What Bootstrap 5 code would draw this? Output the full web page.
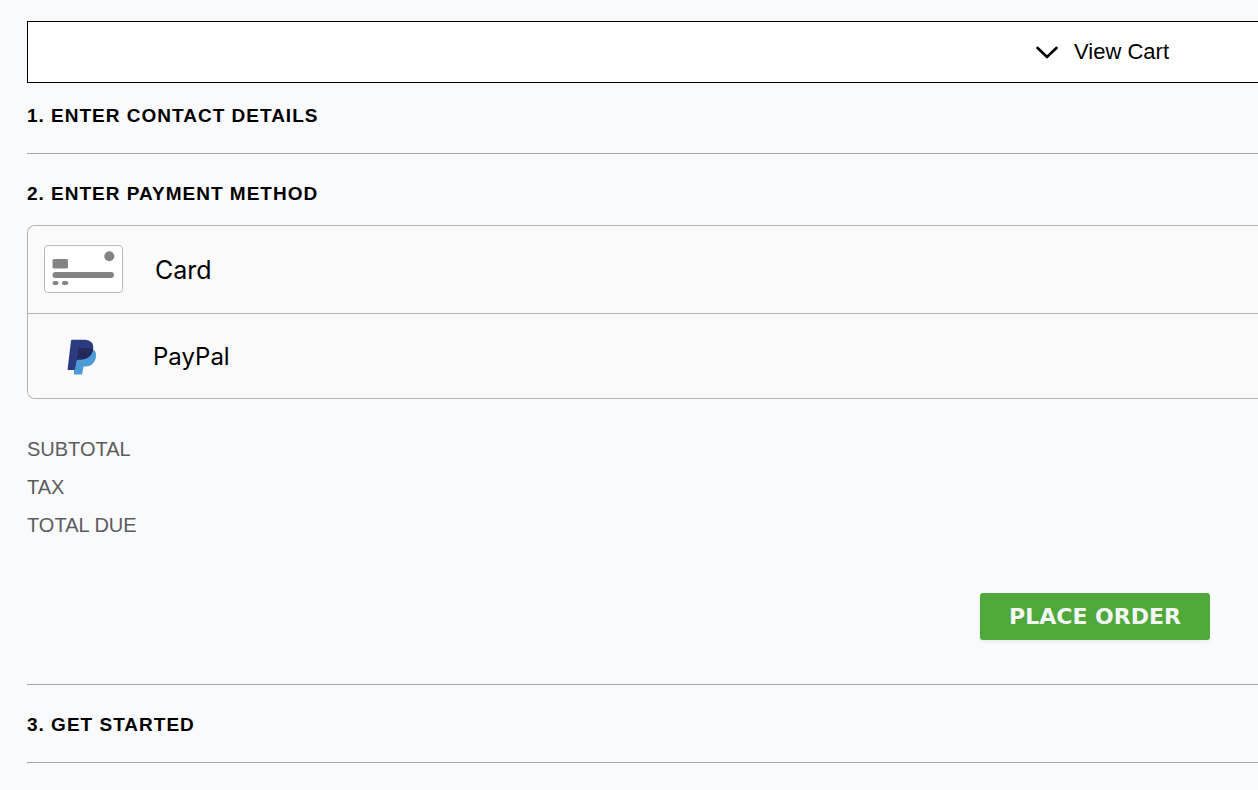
<!DOCTYPE html>
<html lang="en">
<head>
<meta charset="utf-8">
<meta name="viewport" content="width=device-width, initial-scale=1">
<title>Checkout</title>
<link href="https://cdn.jsdelivr.net/npm/bootstrap@5.3.0/dist/css/bootstrap.min.css" rel="stylesheet">
<style>
  body { background: #f9fafc; color: #000; font-family: "Liberation Sans", Arial, sans-serif; }
  .checkout { padding: 21px 0 24px 27px; }
  .cart-toggle { height: 62px; padding-right: 89px; gap: 16px; background: #fff; border: 1px solid #000; border-right: 0; font-size: 22px; line-height: 24px; color: #000; }
  .step { padding: 28px 0 25px; border-bottom: 1px solid #a6a7a9; }
  .step-first { padding-top: 21px; }
  .step-order { padding-bottom: 44px; }
  .step-title { font-size: 19px; line-height: 24px; font-weight: 700; letter-spacing: 1px; margin: 0; }
  .methods { margin-top: 19px; border: 1px solid #b3b3b3; border-right: 0; border-radius: 8px 0 0 8px; overflow: hidden; }
  .method { background: #fafafa; border: 0; color: #000; font-family: Inter, sans-serif; font-size: 25px; line-height: 30px; }
  .method-card { height: 88px; padding: 0 16px; gap: 32px; border-bottom: 1px solid #b3b3b3; }
  .method-paypal { height: 84px; padding: 2px 16px 0; gap: 30px; font-size: 24px; }
  .totals { margin: 31px 0 0; font-size: 20px; color: #5c5c5e; }
  .totals dt { font-weight: 400; line-height: 38px; }
  .order-row { padding: 49px 48px 0 0; }
  .order-btn { width: 230px; height: 47px; padding: 0; background: #4fa83a; color: #f3f5f6; border: 0; border-radius: 3px; font-family: "DejaVu Sans", sans-serif; font-weight: 700; font-size: 22px; line-height: 24px; box-shadow: 0 2px 3px rgba(0,0,0,.06); }
  .order-btn:hover { background: #45962f; color: #fff; }
</style>
</head>
<body>
<main class="checkout">
  <button type="button" class="cart-toggle w-100 d-flex align-items-center justify-content-end">
    <svg width="22" height="14" viewBox="0 0 22 14" fill="none" stroke="#000" stroke-width="2.7" stroke-linecap="round" stroke-linejoin="miter" aria-hidden="true"><path d="M1.600 3 11 12 20.400 3"/></svg>
    <span>View Cart</span>
  </button>

  <section class="step step-first">
    <h2 class="step-title">1. ENTER CONTACT DETAILS</h2>
  </section>

  <section class="step step-order">
    <h2 class="step-title">2. ENTER PAYMENT METHOD</h2>
    <div class="methods">
      <button type="button" class="method method-card w-100 d-flex align-items-center text-start">
        <svg width="79" height="50" viewBox="0 0 79 50" aria-hidden="true">
          <rect x=".5" y=".5" width="78" height="47" rx="3.5" fill="#fff" stroke="#b8b8b8"/>
          <g fill="#848484"><circle cx="65.3" cy="11.3" r="5"/><rect x="8.5" y="14" width="15.5" height="9.5" rx="1.5"/><rect x="8.5" y="27" width="61.5" height="6" rx="3"/><rect x="8.5" y="36" width="6" height="4" rx="2"/><rect x="18" y="36" width="6.3" height="4" rx="2"/></g>
        </svg>
        <span>Card</span>
      </button>
      <button type="button" class="method method-paypal w-100 d-flex align-items-center text-start">
        <svg width="79" height="50" viewBox="0 0 79 50" aria-hidden="true">
          <path fill="#4a9bd5" d="M30 18h20.200C51.800 19.800 52.300 22 51.900 25 50.900 31.500 46.500 34.500 41 34.500H39.500L38.300 41.500Q38.200 42.500 37.200 42.500H30Z"/>
          <path fill="#2a3b80" d="M28 7.800H40.500C46.500 7.800 50 11.500 49.200 16.500 48.200 23.800 43.500 27.500 37 27.500H34.500Q32.800 27.500 32.400 29.200L31 38H24.300Q23.500 38 23.600 37.200L27 8.800Q27.100 7.800 28 7.800Z"/>
          <path fill="#242a5d" d="M35 16H49.200C48.400 23.500 43.500 27.500 37 27.500H34.500L32.900 28.100 34.300 17Q34.400 16 35 16Z"/>
        </svg>
        <span>PayPal</span>
      </button>
    </div>

    <dl class="totals">
      <dt>SUBTOTAL</dt>
      <dt>TAX</dt>
      <dt>TOTAL DUE</dt>
    </dl>

    <div class="order-row d-flex justify-content-end">
      <button type="submit" class="btn order-btn">PLACE ORDER</button>
    </div>
  </section>

  <section class="step">
    <h2 class="step-title">3. GET STARTED</h2>
  </section>
</main>
<script src="https://cdn.jsdelivr.net/npm/bootstrap@5.3.0/dist/js/bootstrap.bundle.min.js"></script>
</body>
</html>
